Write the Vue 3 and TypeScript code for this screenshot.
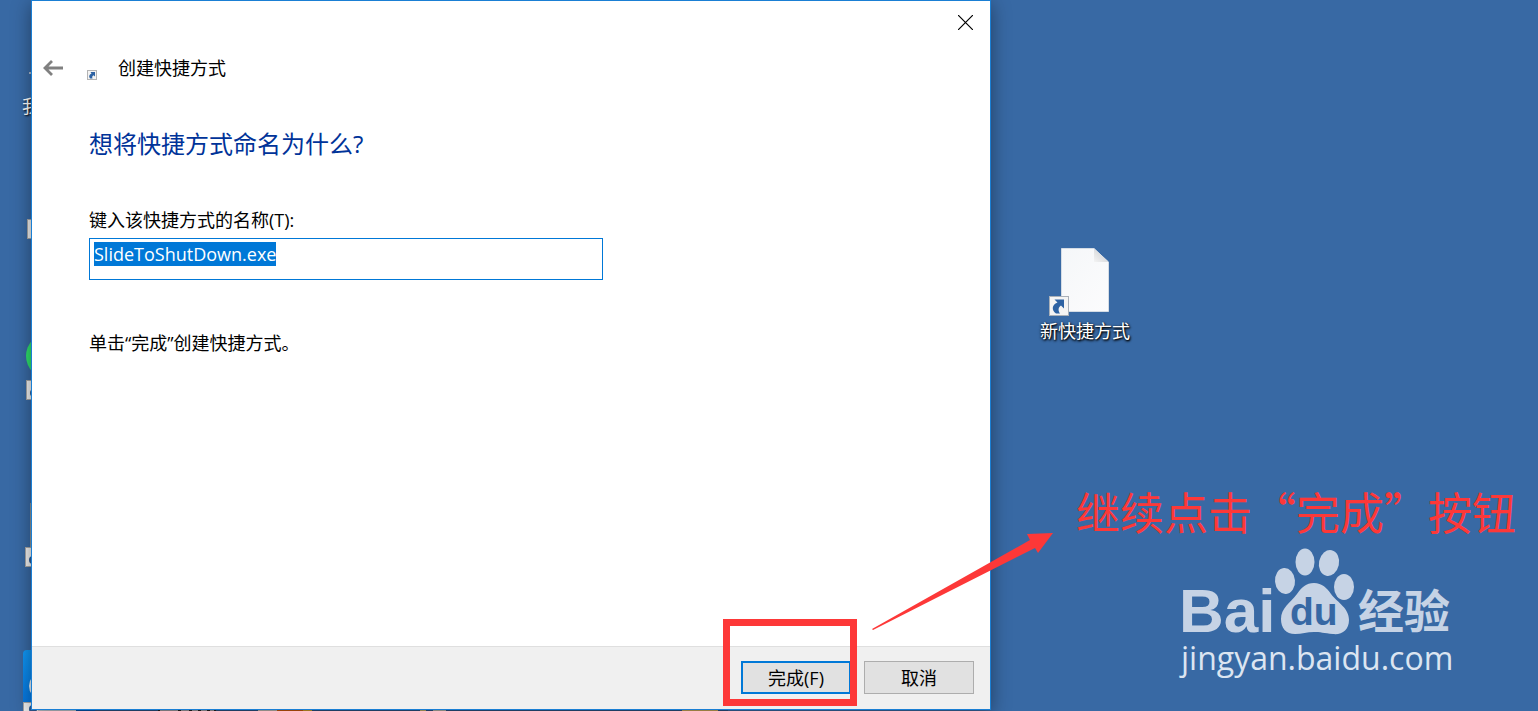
<script setup lang="ts">
import { onMounted, ref } from 'vue'

const shortcutName = ref('SlideToShutDown.exe')
const nameField = ref<HTMLInputElement | null>(null)

onMounted(() => {
  nameField.value?.focus()
  nameField.value?.select()
})
</script>

<template>
  <main class="desktop">
    <div class="icons" aria-hidden="true">
      <span class="speck"></span>
      <span class="icon-label">我</span>
      <span class="chip chip-a"></span>
      <span class="ball"></span>
      <span class="chip chip-b"><i></i></span>
      <span class="thumb"></span>
      <span class="chip chip-c"><i></i></span>
      <span class="tile"><i></i></span>
      <span class="chip chip-d"><i></i></span>
      <span class="strip"></span>
    </div>

    <section class="dialog" aria-labelledby="dialog-title">
      <div class="caption">
        <button class="close" type="button" aria-label="关闭">
          <svg width="15" height="15" viewBox="0 0 15 15"><path d="M0 0L15 15M15 0L0 15" stroke="#000" stroke-width="1.2" fill="none" /></svg>
        </button>
      </div>
      <header class="head">
        <button class="back" type="button" aria-label="返回">
          <svg width="20" height="16" viewBox="0 0 20 16"><path d="M20 8H2M9 1L2 8L9 15" stroke="#808080" stroke-width="2.8" fill="none" /></svg>
        </button>
        <svg class="mini" width="10" height="10" viewBox="0 0 20 20">
          <rect x="1" y="1" width="18" height="18" fill="#f3f3f3" stroke="#b4b4b4" stroke-width="2" />
          <path d="M7 4H16V13L13 10.500C10 12.500 10 14 11 17H6C3 13 4 9 9 7Z" fill="#2d62a3" />
        </svg>
        <span id="dialog-title" class="title">创建快捷方式</span>
      </header>

      <form id="wizard" class="content" @submit.prevent>
        <h1>想将快捷方式命名为什么?</h1>
        <label for="shortcut-name">键入该快捷方式的名称(T):</label>
        <input id="shortcut-name" ref="nameField" v-model="shortcutName" type="text" spellcheck="false" autocomplete="off" />
        <p>单击“完成”创建快捷方式。</p>
      </form>

      <footer class="actions">
        <button class="btn primary" type="submit" form="wizard">完成(F)</button>
        <button class="btn" type="button">取消</button>
      </footer>

      <span class="frame"></span>
      <svg class="arrow" width="182" height="98" viewBox="0 0 182 98">
        <path d="M0 96L158 7L155 1L181 0L166 20L163 15L1 97Z" fill="#fd3838" />
      </svg>
    </section>

    <aside class="side">
      <div class="shortcut">
        <svg width="62" height="70" viewBox="0 0 62 70">
          <defs>
            <linearGradient id="paper" x1="0" y1="0" x2="1" y2="1">
              <stop offset="0" stop-color="#f5f7f9" />
              <stop offset="1" stop-color="#fcfcfd" />
            </linearGradient>
            <linearGradient id="fold" x1="0" y1="1" x2="1" y2="0">
              <stop offset="0" stop-color="#f4f4f4" />
              <stop offset="1" stop-color="#c5c8cc" />
            </linearGradient>
          </defs>
          <path d="M13.500 1.500H46L60.500 15V64.500H13.500Z" fill="url(#paper)" stroke="#d4dce5" />
          <path d="M46 1.500V15H60.500Z" fill="url(#fold)" />
          <rect x="1.500" y="49.500" width="19" height="19" fill="#f4f4f4" stroke="#a9b0b8" />
          <path d="M6.500 52.500H16V61.500L13 58.500C10 60.500 10 63.500 12 66.500H8C3.500 63 3.500 58 9.500 55.500Z" fill="#2d62a3" />
        </svg>
        <span>新快捷方式</span>
      </div>
      <div class="note">继续点击“完成”按钮</div>
      <svg class="watermark" width="282" height="140" viewBox="0 0 282 140" role="img" aria-label="Baidu 经验 jingyan.baidu.com">
        <g fill="#c6d3e5">
          <text class="latin" x="3" y="92" font-size="62">Bai</text>
          <ellipse cx="109" cy="41" rx="10" ry="13" transform="rotate(-5 109 41)" />
          <ellipse cx="129" cy="22" rx="9.500" ry="13.500" />
          <ellipse cx="153" cy="23" rx="10" ry="13" transform="rotate(12 153 23)" />
          <ellipse cx="168" cy="47" rx="10" ry="13" />
          <path d="M138 43C146 43 151 48 155 54C162 63 173 68 173 80C173 90 166 95 157 94C148 93 144 92 138 92C131 92 126 94 119 94C110 94 105 88 105 79C105 68 114 63 121 54C126 47 130 43 138 43Z" />
          <text class="cjk" x="182" y="88" font-size="46">经验</text>
          <text class="url" x="5" y="130" font-size="32" fill="#dce5f1">jingyan.baidu.com</text>
        </g>
        <text class="latin" x="114" y="85" font-size="39" fill="#3768a4">du</text>
      </svg>
    </aside>
  </main>
</template>

<style>
body {
  margin: 0;
}
</style>

<style scoped>
.desktop {
  position: relative;
  display: grid;
  grid-template-columns: 31px minmax(0, 1fr) 547px;
  min-height: 100vh;
  overflow: hidden;
  background: #3869a4;
  color: #000;
  font: 18px/24px "Open Sans", "Noto Sans CJK SC", sans-serif;
}

.icons > * {
  position: absolute;
}

.speck {
  top: 72px;
  left: 29px;
  width: 4px;
  height: 2px;
  background: #a9b9cc;
}

.icon-label {
  top: 94px;
  left: 22px;
  color: #fff;
  text-shadow: 1px 1px 2px #000;
}

.chip {
  box-sizing: border-box;
  width: 20px;
  height: 20px;
  border: 1px solid #a6a6a6;
  background: #f0f0f0;
}

.chip i {
  position: absolute;
  top: 8px;
  left: 3px;
  width: 8px;
  height: 8px;
  border-radius: 50%;
  background: #2d5c96;
}

.chip-a {
  top: 219px;
  left: 27px;
}

.ball {
  top: 333px;
  left: 26px;
  width: 46px;
  height: 46px;
  border-radius: 50%;
  background: #2ee06c;
}

.chip-b {
  top: 380px;
  left: 26px;
}

.thumb {
  top: 503px;
  left: 30px;
  width: 8px;
  height: 44px;
  background: #8b9398;
}

.chip-c {
  top: 547px;
  left: 25px;
}

.tile {
  top: 650px;
  left: 23px;
  width: 48px;
  height: 52px;
  border-radius: 4px 0 0;
  background: linear-gradient(#1097f5, #0677e0);
}

.tile i {
  position: absolute;
  top: 24px;
  left: 6px;
  width: 20px;
  height: 24px;
  border-radius: 50%;
  background: #e8eef4;
}

.chip-d {
  top: 702px;
  left: 23px;
}

.chip-d i {
  top: 2px;
  left: 5px;
}

.strip {
  bottom: 0;
  left: 38px;
  width: 690px;
  height: 1px;
  background: linear-gradient(90deg, #c4cbd3 0 38px, #0457b0 38px 57px, #2b5386 57px 120px, #222 120px 122px, #a5a0a5 122px 140px, #222 140px 143px, #a5a0a5 143px 151px, #222 151px 154px, #a5a0a5 154px 160px, #222 160px 163px, #a5a0a5 163px 169px, #222 169px 172px, #a5a0a5 172px 176px, #222 176px 178px, #2b5386 178px 220px, #c5bcb4 220px 239px, #d05a0c 239px 265px, #d6a02c 265px 274px, #2b5386 274px 382px, #c7b06a 382px 388px, #2b5386 388px 395px, #b9b6aa 395px 408px, #2b5386 408px 644px, #cfa95a 644px 680px, #2b5386 680px);
}

.dialog {
  position: relative;
  grid-column: 2;
  display: flex;
  flex-direction: column;
  margin-bottom: 1px;
  border: 1px solid #1a7fd4;
  background: #fff;
  box-shadow: 0 4px 18px rgba(0, 0, 0, 0.4);
}

button {
  padding: 0;
  border: 0;
  background: none;
  color: inherit;
  font: inherit;
}

.caption {
  display: flex;
  justify-content: flex-end;
}

.close {
  display: grid;
  place-items: center;
  width: 50px;
  height: 43px;
}

.head {
  display: flex;
  align-items: center;
  height: 48px;
  padding-left: 11px;
}

.back {
  display: flex;
}

.mini {
  margin: 14px 21px 0 24px;
}

.title {
  line-height: 24px;
}

.content {
  display: flex;
  flex: 1;
  flex-direction: column;
  align-items: flex-start;
  padding: 36px 57px 0;
}

h1 {
  margin: 0 0 48px;
  color: #039;
  font-size: 24px;
  font-weight: 400;
  line-height: 32px;
}

label {
  margin-bottom: 6px;
}

input {
  box-sizing: border-box;
  width: 514px;
  max-width: 100%;
  height: 42px;
  padding: 3px 4px 13px;
  border: 1px solid #0078d7;
  border-radius: 0;
  outline: 0;
  background: #fff;
  color: #000;
  font: inherit;
}

input::selection {
  background: #0078d7;
  color: #fff;
}

p {
  margin: 51px 0 0;
}

.actions {
  display: flex;
  justify-content: flex-end;
  gap: 13px;
  padding: 14px 16px 15px;
  border-top: 1px solid #dfdfdf;
  background: #f0f0f0;
}

.btn {
  width: 110px;
  height: 33px;
  border: 1px solid #adadad;
  background: #e1e1e1;
}

.primary {
  border: 2px solid #0078d7;
}

.frame {
  position: absolute;
  right: 133px;
  bottom: 3px;
  box-sizing: border-box;
  width: 134px;
  height: 87px;
  border: 7px solid #fd3838;
}

.arrow {
  position: absolute;
  right: -64px;
  bottom: 78px;
}

.side {
  display: flex;
  flex-direction: column;
  align-items: flex-start;
  padding-top: 247px;
}

.shortcut {
  display: flex;
  flex-direction: column;
  align-items: center;
  gap: 2px;
  margin-left: 49px;
  color: #fff;
  text-shadow: 1px 1px 2px #000, 0 1px 3px #000;
}

.shortcut svg {
  margin-right: 12px;
}

.note {
  margin: 136px 0 0 85px;
  color: #fd3838;
  font: 44px/64px "Noto Sans CJK SC", sans-serif;
  white-space: nowrap;
}

.watermark {
  margin: -3px 0 0 185px;
}

.latin {
  font-family: "Liberation Sans", sans-serif;
  font-weight: 700;
}

.cjk {
  font-family: "Noto Sans CJK SC", sans-serif;
  font-weight: 700;
}

.url {
  font-family: "Open Sans", sans-serif;
  font-weight: 500;
}
</style>
